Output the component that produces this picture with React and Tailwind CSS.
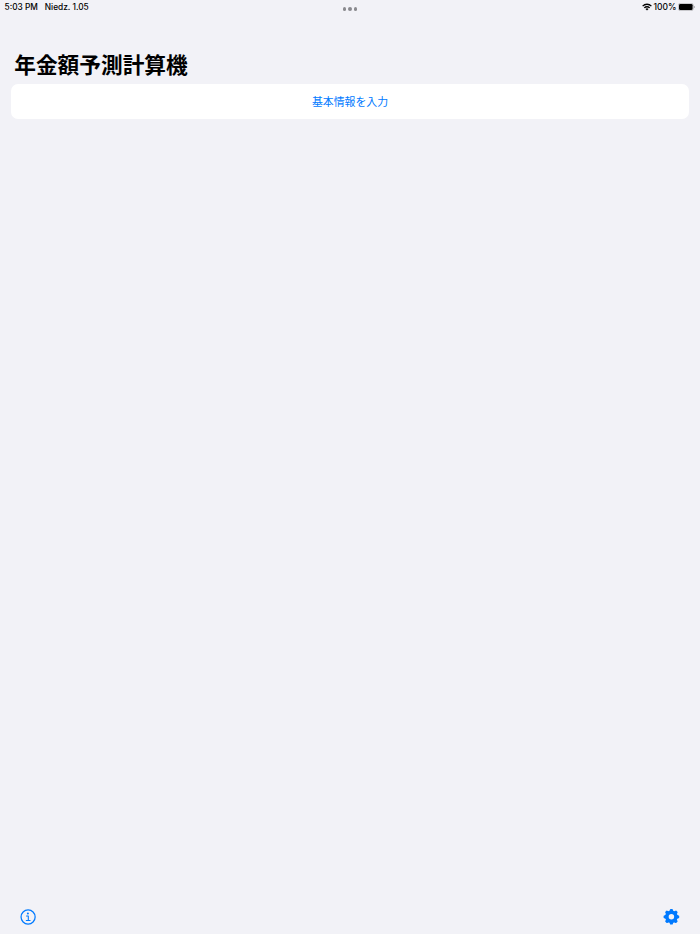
import React from "react";

const teeth = [0, 45, 90, 135, 180, 225, 270, 315];

const WifiIcon = () => (
  <svg width="10" height="8" viewBox="0 0 20 16" fill="none" stroke="#000" strokeWidth="2.6">
    <path d="M1.2 6.2a12.4 12.4 0 0 1 17.6 0" />
    <path d="M4.6 9.8a7.6 7.6 0 0 1 10.8 0" />
    <path d="M10 15.2l-3.1-3.1a4.4 4.4 0 0 1 6.2 0z" fill="#000" stroke="none" />
  </svg>
);

const BatteryIcon = () => (
  <svg width="17" height="8" viewBox="0 0 17 8">
    <rect x="0.3" y="0.3" width="15" height="7.4" rx="2.2" fill="none" stroke="#000" strokeOpacity="0.35" strokeWidth="0.6" />
    <rect x="1" y="0.9" width="13.6" height="6.2" rx="1.4" fill="#000" />
    <path d="M15.9 2.8v2.4c.5-.2.8-.7.8-1.2s-.3-1-.8-1.2z" fill="#000" fillOpacity="0.45" />
  </svg>
);

const InfoIcon = () => (
  <svg width="16" height="16" viewBox="0 0 16 16" fill="none" stroke="#007aff">
    <circle cx="8.1" cy="8" r="7.05" strokeWidth="1.25" />
    <circle cx="7.9" cy="4.5" r="1" fill="#007aff" stroke="none" />
    <path d="M6.5 7h1.8v4.5M6.3 11.5h3.8" strokeWidth="1.1" strokeLinecap="round" strokeLinejoin="round" />
  </svg>
);

const GearIcon = () => (
  <svg width="16" height="16" viewBox="0 0 16 16" overflow="visible">
    <circle cx="8.4" cy="7.8" r="4.5" fill="none" stroke="#007aff" strokeWidth="3.5" />
    {teeth.map((angle) => (
      <path
        key={angle}
        d="M6.2 2.8L7 0.6Q7.1 0 7.7 0H9.1Q9.7 0 9.8 0.6L10.6 2.8z"
        fill="#007aff"
        transform={`rotate(${angle} 8.4 7.8)`}
      />
    ))}
  </svg>
);

const App = () => {
  return (
    <div lang="ja" className="flex h-screen flex-col overflow-hidden bg-[#f2f2f7] font-['Inter','Noto_Sans_CJK_JP',sans-serif] text-black">
      {/* Status bar */}
      <header className="grid h-[14px] shrink-0 grid-cols-3 items-center pl-[4.5px] pr-[4.5px] text-[8.6px] leading-[14px] font-medium">
        <div className="flex gap-[7px] text-[8.3px]">
          <span>5:03 PM</span>
          <span>Niedz. 1.05</span>
        </div>
        <div className="flex justify-center gap-[2px] pt-[4px]">
          <span className="size-[3.4px] rounded-full bg-[#8a8a8e]"></span>
          <span className="size-[3.4px] rounded-full bg-[#8a8a8e]"></span>
          <span className="size-[3.4px] rounded-full bg-[#8a8a8e]"></span>
        </div>
        <div className="flex items-center justify-end gap-[2px]">
          <WifiIcon />
          <span className="text-[8.5px]">100%</span>
          <BatteryIcon />
        </div>
      </header>

      <main className="flex-1 px-[11px] pt-9">
        <h1 className="h-[34px] pl-[3.2px] text-[21.7px] leading-[30px] font-bold">年金額予測計算機</h1>
        <button className="block h-[35px] w-full rounded-[7px] bg-white pt-[2px] text-center text-[10.9px] text-[#007aff]">
          基本情報を入力
        </button>
      </main>

      {/* Bottom toolbar */}
      <footer className="flex h-[34px] shrink-0 items-start justify-between pl-5 pr-[21px] pt-[9px]">
        <button aria-label="Info">
          <InfoIcon />
        </button>
        <button aria-label="Settings">
          <GearIcon />
        </button>
      </footer>
    </div>
  );
};

export default App;
